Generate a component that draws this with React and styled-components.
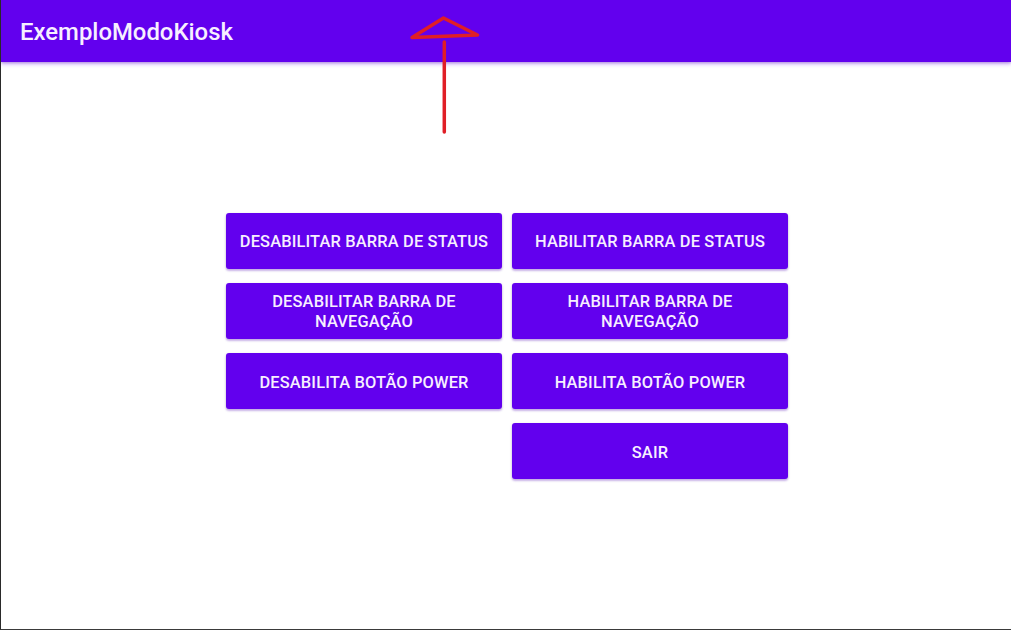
import React from "react";
import styled, { createGlobalStyle } from "styled-components";

const Global = createGlobalStyle`
  html, body { margin: 0; padding: 0; background: #fff; }
  body { font-family: Roboto, "Noto Sans", sans-serif; }
  * { box-sizing: border-box; }
`;

const Screen = styled.div`
  position: relative;
  width: 1011px;
  height: 630px;
  display: flex;
  flex-direction: column;
  background: #ffffff;
  border-left: 1px solid #2a2a2a;
  border-bottom: 1px solid #3a3a3a;
  overflow: hidden;
`;

const AppBar = styled.header`
  height: 62px;
  flex: none;
  display: flex;
  align-items: center;
  padding-left: 19px;
  background: #6200ee;
  box-shadow: 0 2px 4px rgba(98, 0, 238, 0.35), 0 1px 2px rgba(0, 0, 0, 0.15);
  position: relative;
  z-index: 1;
`;

const Title = styled.h1`
  margin: 0;
  margin-top: 1px;
  font-family: Roboto, sans-serif;
  font-weight: 500;
  font-size: 23.9px;
  letter-spacing: 0;
  color: #f7efff;
`;

const Content = styled.main`
  flex: 1;
  display: flex;
  align-items: center;
  justify-content: center;
  padding-top: 1px;
  padding-left: 2px;
`;

const Grid = styled.div`
  display: grid;
  grid-template-columns: 276px 276px;
  grid-auto-rows: 56px;
  column-gap: 10px;
  row-gap: 14.3px;
`;

const Button = styled.button`
  grid-column: ${(p) => p.$col || "auto"};
  border: none;
  border-radius: 3px;
  background: #6200ee;
  color: #f7efff;
  font-family: Roboto, sans-serif;
  font-weight: 500;
  font-size: 16.4px;
  line-height: 20px;
  letter-spacing: 0.01em;
  text-transform: uppercase;
  padding: 3px 12px 0;
  box-shadow: 0 2px 2px rgba(98, 0, 238, 0.22), 0 1px 3px rgba(0, 0, 0, 0.18);
  cursor: pointer;
`;

const Annotation = styled.svg`
  position: absolute;
  left: 0;
  top: 0;
  z-index: 2;
  pointer-events: none;
`;

export default function App() {
  return (
    <>
      <Global />
      <Screen>
        <AppBar>
          <Title>ExemploModoKiosk</Title>
        </AppBar>
        <Content>
          <Grid>
            <Button>Desabilitar barra de status</Button>
            <Button>Habilitar barra de status</Button>
            <Button>Desabilitar barra de navegação</Button>
            <Button>Habilitar barra de navegação</Button>
            <Button>Desabilita botão power</Button>
            <Button>Habilita botão power</Button>
            <Button $col="2">Sair</Button>
          </Grid>
        </Content>
        <Annotation width="1011" height="630" viewBox="0 0 1011 630">
          <path
            d="M411 37.5 L442.5 18 L476.5 35 Z"
            fill="none"
            stroke="#e01e26"
            strokeWidth="3.5"
            strokeLinejoin="round"
          />
          <path
            d="M443.3 42 L443.3 132"
            fill="none"
            stroke="#e01e26"
            strokeWidth="3.5"
            strokeLinecap="round"
          />
        </Annotation>
      </Screen>
    </>
  );
}
